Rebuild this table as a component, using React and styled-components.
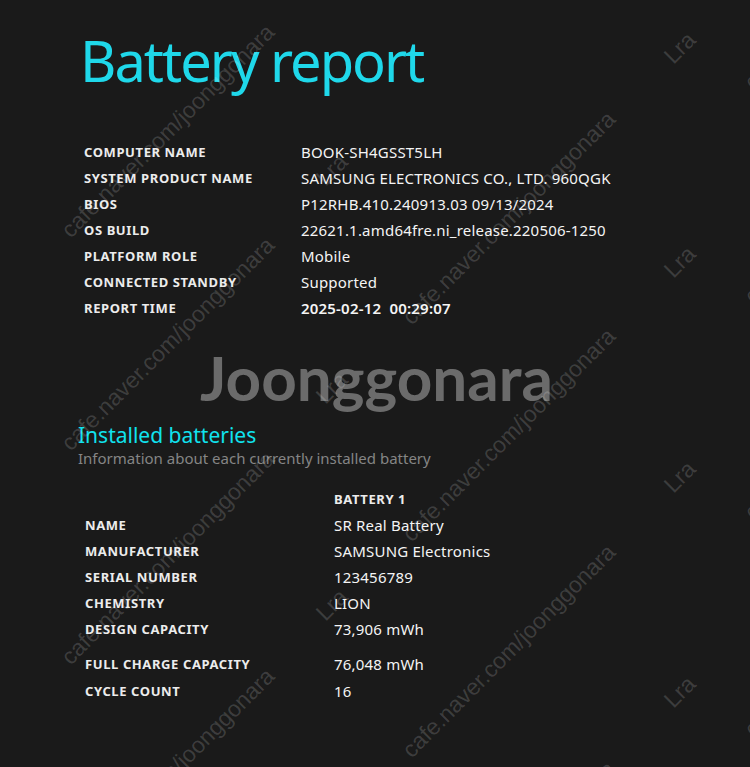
import styled, { createGlobalStyle } from "styled-components";

const GlobalStyle = createGlobalStyle`
  html, body {
    margin: 0;
    background: #1a1a1a;
  }
`;

const Page = styled.main`
  position: relative;
  box-sizing: border-box;
  width: 750px;
  height: 767px;
  overflow: hidden;
  background: #1a1a1a;
  padding: 24px 0 0 78px;
  font-family: "Noto Sans", "Open Sans", sans-serif;
  color: #f2f2f2;
`;

const Title = styled.h1`
  margin: 0 0 0 2px;
  font-size: 56px;
  font-weight: 400;
  line-height: 72px;
  letter-spacing: -2px;
  color: #1fd8ea;
`;

const Table = styled.div`
  display: flex;
  flex-direction: column;
  margin: ${(p) => p.margin};
`;

const Row = styled.div`
  display: grid;
  grid-template-columns: ${(p) => p.labelWidth}px auto;
  align-items: center;
  height: 26px;
  margin-top: ${(p) => p.gap || 0}px;
`;

const Label = styled.div`
  font-size: 13px;
  font-weight: 700;
  color: #ececec;
  letter-spacing: 0.6px;
`;

const Value = styled.div`
  font-size: 15px;
  font-weight: ${(p) => (p.bold ? 600 : 400)};
  color: #f4f4f4;
  letter-spacing: 0.2px;
  white-space: pre;
`;

const SectionTitle = styled.h2`
  margin: 0;
  font-size: 21px;
  font-weight: 400;
  line-height: 26px;
  color: #10e2ee;
`;

const SectionNote = styled.p`
  margin: 0;
  font-size: 15px;
  line-height: 20px;
  color: #858585;
`;

const Section = styled.section`
  margin-top: ${(p) => p.top}px;
`;

const Mark = styled.span`
  position: absolute;
  left: ${(p) => p.x}px;
  top: ${(p) => p.y}px;
  transform: translate(-50%, -50%) rotate(-45deg);
  font-family: "Liberation Sans", Arial, sans-serif;
  font-size: 23px;
  color: rgba(255, 255, 255, 0.16);
  white-space: nowrap;
  pointer-events: none;
`;

const Logo = styled.span`
  position: absolute;
  left: 200px;
  top: 346px;
  font-family: Lato, sans-serif;
  font-size: 62px;
  line-height: 62px;
  font-weight: 700;
  color: #6b6b6b;
  pointer-events: none;
`;

const system = [
  ["COMPUTER NAME", "BOOK-SH4GSST5LH"],
  ["SYSTEM PRODUCT NAME", "SAMSUNG ELECTRONICS CO., LTD. 960QGK"],
  ["BIOS", "P12RHB.410.240913.03 09/13/2024"],
  ["OS BUILD", "22621.1.amd64fre.ni_release.220506-1250"],
  ["PLATFORM ROLE", "Mobile"],
  ["CONNECTED STANDBY", "Supported"],
  ["REPORT TIME", "2025-02-12  00:29:07", true],
];

const battery = [
  ["NAME", "SR Real Battery"],
  ["MANUFACTURER", "SAMSUNG Electronics"],
  ["SERIAL NUMBER", "123456789"],
  ["CHEMISTRY", "LION"],
  ["DESIGN CAPACITY", "73,906 mWh"],
  ["FULL CHARGE CAPACITY", "76,048 mWh", 9],
  ["CYCLE COUNT", "16", 1],
];

const urlMarks = [
  [168, 131], [168, 344], [168, 558], [168, 775],
  [509, 218], [509, 435], [509, 651], [509, 868],
  [851, -17], [851, 197], [851, 413], [851, 630],
];

const lraMarks = [
  [332, 170], [332, 388], [332, 605],
  [680, 48], [680, 262], [680, 477], [680, 692],
];

export default function App() {
  return (
    <>
      <GlobalStyle />
      <Page>
        <Title>Battery report</Title>

        <Table margin="43px 0 0 6px">
          {system.map(([k, v, b]) => (
            <Row key={k} labelWidth={217}>
              <Label>{k}</Label>
              <Value bold={b}>{v}</Value>
            </Row>
          ))}
        </Table>

        <Section top={101}>
          <SectionTitle>Installed batteries</SectionTitle>
          <SectionNote>Information about each currently installed battery</SectionNote>
        </Section>

        <Table margin="18px 0 0 7px">
          <Row labelWidth={249}>
            <span />
            <Label>BATTERY 1</Label>
          </Row>
          {battery.map(([k, v, gap]) => (
            <Row key={k} labelWidth={249} gap={gap}>
              <Label>{k}</Label>
              <Value>{v}</Value>
            </Row>
          ))}
        </Table>

        <Logo>Joonggonara</Logo>
        {urlMarks.map(([x, y]) => (
          <Mark key={`u${x}-${y}`} x={x} y={y}>cafe.naver.com/joonggonara</Mark>
        ))}
        {lraMarks.map(([x, y]) => (
          <Mark key={`l${x}-${y}`} x={x} y={y}>Lra</Mark>
        ))}
      </Page>
    </>
  );
}
